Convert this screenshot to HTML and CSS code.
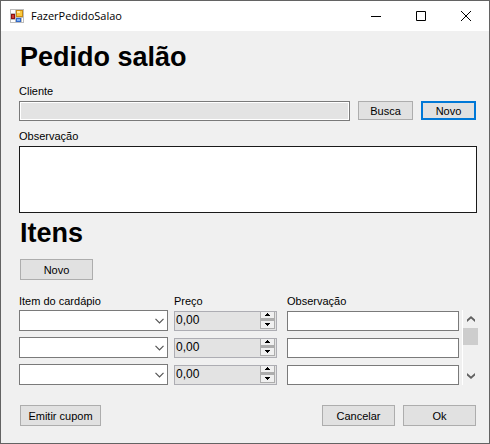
FILE: index.html
```html
<!DOCTYPE html>
<html lang="pt-BR">
<head>
<meta charset="utf-8">
<title>FazerPedidoSalao</title>
<link rel="stylesheet" href="styles.css">
</head>
<body>
<svg class="symbols" aria-hidden="true">
  <symbol id="chevron" viewBox="0 0 9 6"><path d="M0.5 0.8 4.5 4.8 8.5 0.8" fill="none" stroke="#555" stroke-width="1.2"/></symbol>
  <symbol id="up" viewBox="0 0 5 3"><path d="M2 0h1v1h1v1h1v1H0V2h1V1h1z" fill="#000"/></symbol>
  <symbol id="down" viewBox="0 0 5 3"><path d="M0 0h5v1H4v1H3v1H2V2H1V1H0z" fill="#000"/></symbol>
</svg>
<div class="window">
  <header class="titlebar">
    <svg class="app-icon" viewBox="0 0 14 14" aria-hidden="true" shape-rendering="crispEdges">
      <path fill="#bdbdbd" d="M0 0h14v14H0z"/>
      <path fill="#fff" d="M1 1h4v3H1zM1 11h4v2H1zM12 9h1v4h-1z"/>
      <path fill="#c98a12" d="M6 1h7v7H6z"/><path fill="#fbc93d" d="M7 2h5v5H7z"/><path fill="#ffe9a0" d="M7 2h3v2H7z"/>
      <path fill="#8d1010" d="M1 5h4v5H1z"/><path fill="#cf3b30" d="M2 6h2v3H2z"/>
      <path fill="#3268c8" d="M6 9h5v4H6z"/><path fill="#82b4f5" d="M7 10h3v2H7z"/>
    </svg>
    <span class="caption">FazerPedidoSalao</span>
    <button class="win-button" aria-label="Minimizar"><svg viewBox="0 0 10 10"><path d="M0 5.5h10"/></svg></button>
    <button class="win-button" aria-label="Maximizar"><svg viewBox="0 0 10 10"><path d="M.5.5h9v9h-9z"/></svg></button>
    <button class="win-button" aria-label="Fechar"><svg viewBox="0 0 10 10"><path d="M0 0l10 10M10 0L0 10"/></svg></button>
  </header>
  <main class="form">
    <h1 class="heading">Pedido salão</h1>
    <label class="label" for="cliente">Cliente</label>
    <div class="client-row">
      <input class="client" id="cliente" type="text" readonly>
      <button class="button small">Busca</button>
      <button class="button small default">Novo</button>
    </div>
    <label class="label spaced" for="obs">Observação</label>
    <textarea class="notes" id="obs"></textarea>
    <h2 class="heading">Itens</h2>
    <button class="button add">Novo</button>
    <div class="items">
      <span class="label" id="col-item">Item do cardápio</span>
      <span class="label" id="col-price">Preço</span>
      <span class="label" id="col-note">Observação</span>

      <div class="combo"><select aria-labelledby="col-item"><option></option></select><svg><use href="#chevron"/></svg></div>
      <div class="spinner"><input type="text" inputmode="decimal" value="0,00" aria-labelledby="col-price"><div class="steps"><button aria-label="Aumentar"><svg><use href="#up"/></svg></button><button aria-label="Diminuir"><svg><use href="#down"/></svg></button></div></div>
      <input class="note" type="text" aria-labelledby="col-note">

      <div class="combo"><select aria-labelledby="col-item"><option></option></select><svg><use href="#chevron"/></svg></div>
      <div class="spinner"><input type="text" inputmode="decimal" value="0,00" aria-labelledby="col-price"><div class="steps"><button aria-label="Aumentar"><svg><use href="#up"/></svg></button><button aria-label="Diminuir"><svg><use href="#down"/></svg></button></div></div>
      <input class="note" type="text" aria-labelledby="col-note">

      <div class="combo"><select aria-labelledby="col-item"><option></option></select><svg><use href="#chevron"/></svg></div>
      <div class="spinner"><input type="text" inputmode="decimal" value="0,00" aria-labelledby="col-price"><div class="steps"><button aria-label="Aumentar"><svg><use href="#up"/></svg></button><button aria-label="Diminuir"><svg><use href="#down"/></svg></button></div></div>
      <input class="note" type="text" aria-labelledby="col-note">

      <div class="scrollbar">
        <button aria-label="Rolar para cima"><svg viewBox="0 0 8 6"><path d="M0 3.5 4 0l4 3.5V6L4 2.5 0 6z"/></svg></button>
        <div class="thumb"></div>
        <button class="scroll-down" aria-label="Rolar para baixo"><svg viewBox="0 0 8 6"><path d="M0 2.5 4 6l4-3.5V0L4 3.5 0 0z"/></svg></button>
      </div>
    </div>
    <footer class="actions">
      <button class="button receipt">Emitir cupom</button>
      <button class="button">Cancelar</button>
      <button class="button">Ok</button>
    </footer>
  </main>
</div>
</body>
</html>
```
FILE: styles.css
```css
* { box-sizing: border-box; }

body {
  margin: 0;
  background: #f0f0f0;
  color: #000;
  font: 11px/14px "Liberation Sans", sans-serif;
}

button, input, select, textarea {
  margin: 0;
  padding: 0;
  border: 0;
  border-radius: 0;
  background: none;
  color: inherit;
  font: inherit;
  min-width: 0;
}

.symbols { display: none; }

.window {
  display: flex;
  flex-direction: column;
  min-height: 100vh;
  border: 1px solid #636363;
}

.titlebar {
  display: flex;
  align-items: center;
  height: 30px;
  padding: 0 1px 0 9px;
  background: #fff;
}

.app-icon { width: 14px; height: 14px; }

.caption {
  flex: 1;
  padding-left: 7px;
  font: 11px/16px "Open Sans", sans-serif;
}

.win-button {
  display: flex;
  align-items: center;
  justify-content: center;
  width: 45px;
  height: 30px;
}

.win-button svg {
  width: 10px;
  height: 10px;
  fill: none;
  stroke: #000;
}

.form {
  display: flex;
  flex-direction: column;
  padding: 10px 12px 16px 18px;
}

.heading {
  margin: 0;
  padding-left: 1px;
  font: bold 27px/32px "Liberation Sans", sans-serif;
}

.form > .label { margin: 11px 0 3px; }
.form > .spaced { margin-top: 8px; }

.client-row {
  display: flex;
  gap: 8px;
  padding-right: 1px;
}

.client {
  flex: 1;
  height: 20px;
  border: 1px solid #7a7a7a;
  background: #e3e3e3;
  box-shadow: inset 0 0 0 1px #fff;
}

.button {
  width: 73px;
  height: 21px;
  border: 1px solid #adadad;
  background: #e1e1e1;
}

.small { width: 55px; height: 19px; }
.default { border: 2px solid #0078d7; }

.notes {
  height: 67px;
  margin-bottom: 4px;
  border: 1px solid #1a1a1a;
  background: #fff;
  resize: none;
}

.add { margin: 10px 0 14px 1px; }

.items {
  display: grid;
  grid-template-columns: minmax(0, 155fr) minmax(0, 113fr) minmax(0, 175fr) 16px;
  grid-template-rows: 10px repeat(3, 21px);
  row-gap: 6px;
  align-items: center;
  margin-right: -1px;
}

.items .label { grid-row: 1; align-self: start; }

.combo {
  display: grid;
  grid-column: 1;
  align-items: center;
  margin-right: 6px;
}

.combo select {
  grid-area: 1 / 1;
  width: 100%;
  height: 21px;
  border: 1px solid #7a7a7a;
  background: #fff;
  appearance: none;
}

.combo svg {
  grid-area: 1 / 1;
  justify-self: end;
  width: 9px;
  height: 6px;
  margin-right: 4px;
  pointer-events: none;
}

.spinner {
  display: flex;
  height: 20px;
  margin-right: 10px;
  border: 1px solid #adadb3;
  background: #e3e3e3;
}

.spinner input { flex: 1; padding: 0 1px 1px; font-size: 12px; }

.steps {
  display: flex;
  flex-direction: column;
  gap: 1px;
  width: 15px;
  margin: 0 1px 1px 0;
  background: #adadad;
}

.steps button {
  display: flex;
  flex: 1;
  align-items: center;
  justify-content: center;
  border: 1px solid #adadad;
  background: #f0f0f0;
}

.steps button:first-child { border-top: 0; }
.steps svg { width: 5px; height: 3px; }

.note {
  height: 20px;
  margin-right: 3px;
  border: 1px solid #7a7a7a;
  background: #fff;
}

.scrollbar {
  display: flex;
  flex-direction: column;
  grid-area: 2 / 4 / 5 / 5;
  align-self: stretch;
  border-left: 1px solid #fff;
}

.scrollbar button {
  display: flex;
  align-items: center;
  justify-content: center;
  height: 18px;
}

.scrollbar svg { width: 8px; height: 6px; fill: #606060; }
.thumb { height: 17px; background: #cdcdcd; }
.scroll-down { margin-top: auto; }

.actions {
  display: flex;
  gap: 8px;
  margin-top: 20px;
  padding: 0 1px;
}

.receipt { width: 81px; margin-right: auto; }
```
